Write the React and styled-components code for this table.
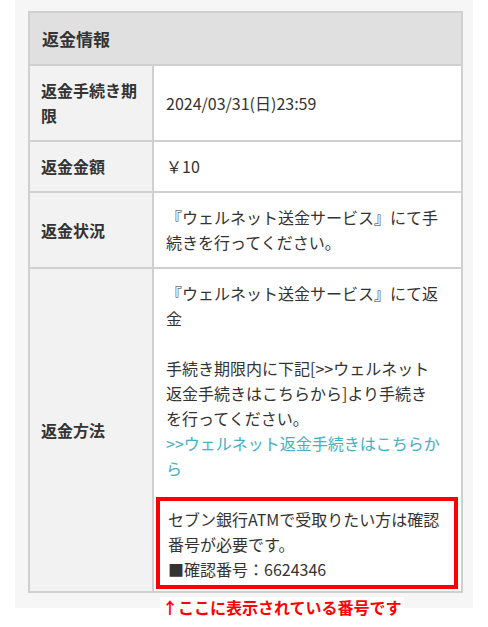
import React from "react";
import styled, { createGlobalStyle } from "styled-components";

const GlobalStyle = createGlobalStyle`
  html, body {
    margin: 0;
    padding: 0;
    background: #fff;
  }
  body {
    font-family: "Noto Sans CJK JP", "Noto Sans", sans-serif;
    color: #333;
  }
`;

const rows = [
  { label: "返金手続き期限", value: "2024/03/31(日)23:59" },
  { label: "返金金額", value: "￥10" },
  { label: "返金状況", value: "『ウェルネット送金サービス』にて手続きを行ってください。" },
];

const App = () => {
  return (
    <Page>
      <GlobalStyle />
      <Panel>
        <InfoTable>
          <colgroup>
            <Col $width={124} />
            <Col $width={309} />
          </colgroup>
          <thead>
            <tr>
              <HeadCell colSpan={2}>返金情報</HeadCell>
            </tr>
          </thead>
          <tbody>
            {rows.map((row) => (
              <tr key={row.label}>
                <LabelCell>{row.label}</LabelCell>
                <ValueCell>{row.value}</ValueCell>
              </tr>
            ))}
            <tr>
              <LabelCell>返金方法</LabelCell>
              <ValueCell>
                『ウェルネット送金サービス』にて返金
                <br />
                <br />
                手続き期限内に下記[&gt;&gt;ウェルネット返金手続きはこちらから]より手続きを行ってください。
                <br />
                <Link href="#">&gt;&gt;ウェルネット返金手続きはこちらから</Link>
                <Highlight>
                  セブン銀行ATMで受取りたい方は確認番号が必要です。
                  <br />
                  ■確認番号：6624346
                </Highlight>
              </ValueCell>
            </tr>
          </tbody>
        </InfoTable>
      </Panel>
      <Caption>↑ここに表示されている番号です</Caption>
    </Page>
  );
};

export default App;

const Page = styled.div`
  position: relative;
  width: 488px;
  height: 627px;
  padding: 0 15px;
  box-sizing: border-box;
`;

const Panel = styled.div`
  width: 458px;
  padding: 11px 12px 15px 13px;
  box-sizing: border-box;
  background: #f6f6f6;
`;

const InfoTable = styled.table`
  width: 433px;
  border-collapse: collapse;
  table-layout: fixed;
  border: 2px solid #d0d0d0;
  font-size: 16px;
  line-height: 25px;
`;

const Col = styled.col`
  width: ${(p) => p.$width}px;
`;

const HeadCell = styled.th`
  height: 51px;
  padding: 0 12px;
  text-align: left;
  background: #e0e0e0;
  border: 2px solid #d0d0d0;
  font-size: 17px;
  font-weight: 700;
  color: #333;
`;

const LabelCell = styled.th`
  padding: 12px 11px;
  text-align: left;
  vertical-align: middle;
  background: #f2f2f2;
  border: 2px solid #d0d0d0;
  font-weight: 700;
  color: #333;
`;

const ValueCell = styled.td`
  padding: 12px 21px 12px 12px;
  vertical-align: middle;
  background: #fff;
  border: 2px solid #d0d0d0;
  color: #333;
  word-break: break-all;
`;

const Link = styled.a`
  color: #45b0c2;
  text-decoration: none;
`;

const Highlight = styled.div`
  margin: 16px -18px -10px -10px;
  padding: 6px 8px 3px;
  border: 4px solid #ff0000;
`;

const Caption = styled.div`
  position: absolute;
  left: 160px;
  top: 597px;
  padding: 0 2px;
  background: #fff;
  color: #ff0000;
  font-size: 16px;
  font-weight: 700;
  line-height: 20px;
`;
